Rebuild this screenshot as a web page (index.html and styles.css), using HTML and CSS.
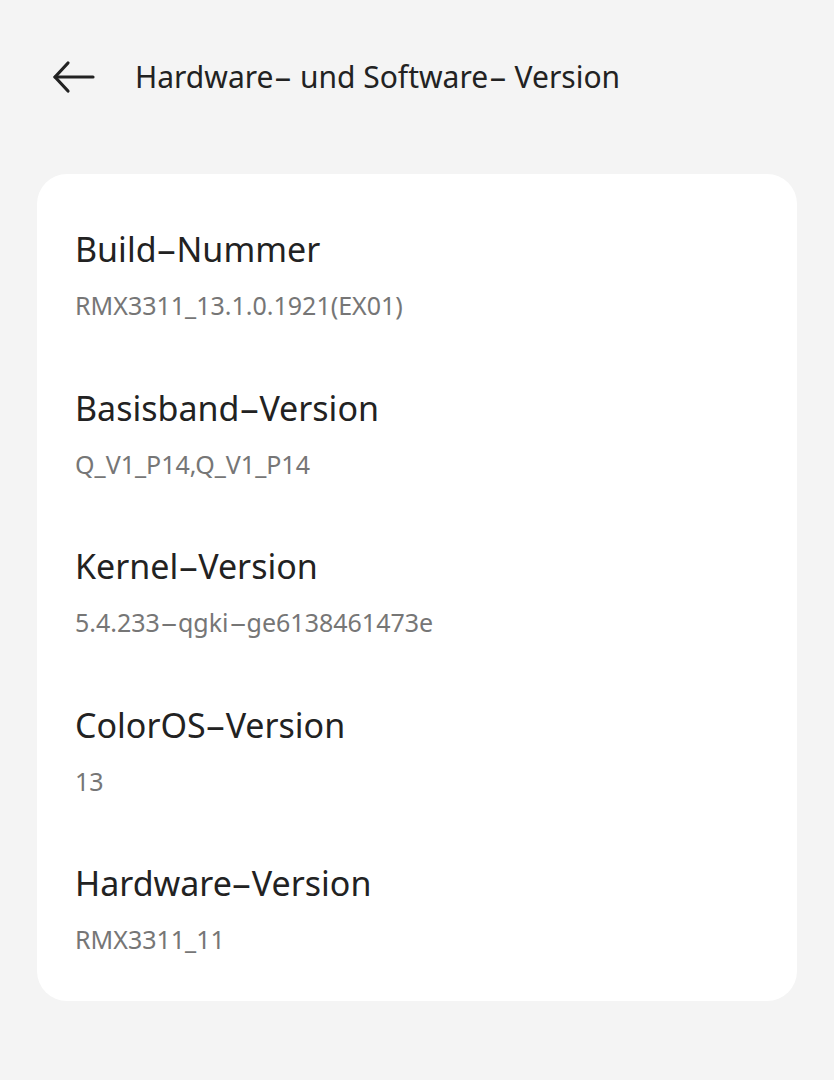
FILE: index.html
```html
<!DOCTYPE html>
<html lang="de">
<head>
<meta charset="utf-8">
<title>Hardware- und Software- Version</title>
<link rel="stylesheet" href="styles.css">
</head>
<body>
<header class="topbar">
  <span class="back" aria-label="Zurück">
    <svg width="44" height="34" viewBox="0 0 44 34" fill="none" stroke="#222" stroke-width="3.2" stroke-linecap="round" stroke-linejoin="round">
      <path d="M3 17 H41"/>
      <path d="M16 3 L3 17 L16 31"/>
    </svg>
  </span>
  <h1 class="title">Hardware<span class="dash">-</span> und Software<span class="dash">-</span> Version</h1>
</header>
<main class="card">
  <div class="row">
    <div class="label">Build<span class="dash">-</span>Nummer</div>
    <div class="value">RMX3311_13.1.0.1921(EX01)</div>
  </div>
  <div class="row">
    <div class="label">Basisband<span class="dash">-</span>Version</div>
    <div class="value">Q_V1_P14,Q_V1_P14</div>
  </div>
  <div class="row">
    <div class="label">Kernel<span class="dash">-</span>Version</div>
    <div class="value">5.4.233<span class="dash">-</span>qgki<span class="dash">-</span>ge6138461473e</div>
  </div>
  <div class="row">
    <div class="label">ColorOS<span class="dash">-</span>Version</div>
    <div class="value">13</div>
  </div>
  <div class="row">
    <div class="label">Hardware<span class="dash">-</span>Version</div>
    <div class="value">RMX3311_11</div>
  </div>
</main>
</body>
</html>
```
FILE: styles.css
```css
* { box-sizing: border-box; }
html, body {
  margin: 0;
  padding: 0;
  background: #f4f4f4;
}
body {
  font-family: "Noto Sans", "Liberation Sans", sans-serif;
  color: #222;
  width: 834px;
  height: 1080px;
  overflow: hidden;
}
.topbar {
  display: flex;
  align-items: center;
  height: 154px;
  padding: 0 0 0 52px;
}
.back {
  display: flex;
  width: 44px;
  height: 34px;
  margin-right: 39px;
}
.title {
  margin: 0;
  font-weight: 400;
  font-size: 30px;
  line-height: 40px;
  color: #222;
}
.dash {
  display: inline-block;
  margin: 0 4.5px;
  transform: scaleX(1.9);
}
.card {
  margin: 20px 37px 0 37px;
  background: #fff;
  border-radius: 30px;
  padding: 55px 38px 45px 38px;
  display: flex;
  flex-direction: column;
  gap: 65.5px;
}
.row {
  display: flex;
  flex-direction: column;
}
.label {
  font-size: 34px;
  line-height: 40px;
  color: #222;
}
.value {
  margin-top: 19px;
  font-size: 25px;
  line-height: 34px;
  color: #767676;
}
.value .dash {
  margin: 0 5px;
  transform: scaleX(2.2);
}
```
